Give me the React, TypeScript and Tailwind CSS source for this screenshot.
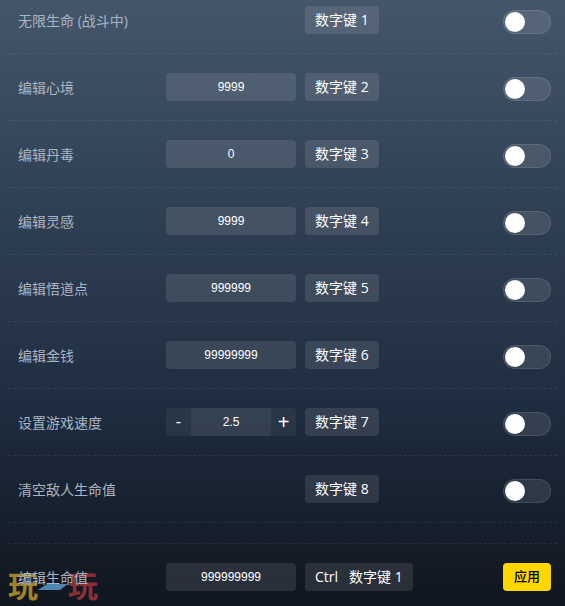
const cjk = 'font-["Open_Sans","Noto_Sans_CJK_SC",sans-serif]';

function Toggle() {
  return (
    <div className="ml-auto mr-[-4px] mt-[3px] flex h-6 w-12 shrink-0 items-center rounded-xl border border-white/10 bg-white/10 pl-px">
      <div className="h-5 w-5 rounded-full bg-white" />
    </div>
  );
}

function Key({ children }: { children: React.ReactNode }) {
  return (
    <div className="flex h-7 shrink-0 items-center gap-2.5 rounded bg-white/10 px-2.5 text-sm text-white">
      {children}
    </div>
  );
}

function Field({ value }: { value: string }) {
  return (
    <input
      readOnly
      value={value}
      className='h-7 w-[130px] shrink-0 rounded bg-white/10 text-center font-["Liberation_Sans",sans-serif] text-xs font-medium text-white outline-none'
    />
  );
}

function Stepper() {
  return (
    <div className='flex h-7 w-[130px] shrink-0 overflow-hidden rounded bg-white/[0.05] font-["Liberation_Sans",sans-serif] text-white'>
      <div className="flex w-[25px] items-center justify-center text-base">-</div>
      <div className="flex w-20 items-center justify-center bg-white/[0.06] text-xs">2.5</div>
      <div className="flex w-[25px] items-center justify-center text-xl">+</div>
    </div>
  );
}

type RowData = { label: string; key: string; field?: string; stepper?: boolean };

const rows: RowData[] = [
  { label: "无限生命 (战斗中)", key: "1" },
  { label: "编辑心境", key: "2", field: "9999" },
  { label: "编辑丹毒", key: "3", field: "0" },
  { label: "编辑灵感", key: "4", field: "9999" },
  { label: "编辑悟道点", key: "5", field: "999999" },
  { label: "编辑金钱", key: "6", field: "99999999" },
  { label: "设置游戏速度", key: "7", stepper: true },
  { label: "清空敌人生命值", key: "8" },
];

function Row({ row }: { row: RowData }) {
  return (
    <div className="flex h-[67px] items-center border-b border-dashed border-white/[0.08] px-2.5">
      <div className="w-[148px] shrink-0 pt-px text-sm text-[#a9b5c2]">{row.label}</div>
      <div className="w-[130px] shrink-0">
        {row.field && <Field value={row.field} />}
        {row.stepper && <Stepper />}
      </div>
      <div className="ml-[9px]">
        <Key>数字键 {row.key}</Key>
      </div>
      <Toggle />
    </div>
  );
}

export default function App() {
  return (
    <div className={`relative h-[606px] w-[565px] overflow-hidden bg-gradient-to-b from-[#44566a] via-[#1e2c3f] via-[68%] to-[#10161f] ${cjk}`}>
      <div className="pointer-events-none absolute bottom-[3px] left-2 flex h-[34px] items-center">
        <span className="text-[30px] font-bold leading-[34px] text-[#a08228]">玩</span>
        <svg width="30" height="6" viewBox="0 0 30 6" className="mt-[2px] shrink-0">
          <polygon points="9,0 30,0 22,6 0,6" fill="#4f86b0" />
        </svg>
        <span className="text-[30px] font-bold leading-[34px] text-[#8a3034]">玩</span>
      </div>
      <div className="relative -mt-[13px] px-2">
        {rows.map((r) => (
          <Row key={r.key} row={r} />
        ))}
        <div className="h-[21px] border-b border-dashed border-white/[0.08]" />
        <div className="flex items-center px-2.5 pt-[19px]">
          <div className="w-[148px] shrink-0 pt-px text-sm text-[#a9b5c2]">编辑生命值</div>
          <Field value="999999999" />
          <div className="ml-[9px]">
            <Key>
              <span className="w-6">Ctrl</span>
              <span>数字键 1</span>
            </Key>
          </div>
          <button className="ml-auto mr-[-4px] h-7 w-12 rounded bg-[#ffd700] text-[13px] font-medium text-black">应用</button>
        </div>
      </div>
    </div>
  );
}
